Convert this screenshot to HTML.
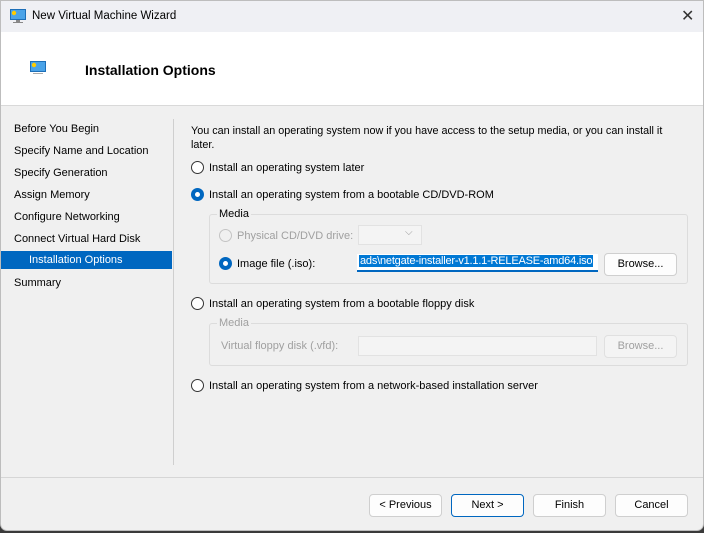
<!DOCTYPE html>
<html><head><style>
*{margin:0;padding:0;box-sizing:border-box}
body{width:704px;height:533px;overflow:hidden;background:#3a3a3a;font-family:"Liberation Sans",sans-serif;font-size:11px;color:#000;position:relative}
.win{position:absolute;left:0;top:0;width:704px;height:531px;background:#f0f0f0;border:1px solid #bdbdbd;border-radius:0 0 7px 7px;overflow:hidden}
.a{position:absolute;white-space:nowrap}
.title{position:absolute;left:0;top:0;width:704px;height:31px;background:#eff0f4}
.hdr{position:absolute;left:0;top:31px;width:704px;height:74px;background:#fff;border-bottom:1px solid #d9d9d9}
.nav{position:absolute;left:13px;font-size:11px}
.sel{position:absolute;left:0;top:250px;width:171px;height:18px;background:#0067c0;color:#fff}
.radio{position:absolute;width:13px;height:13px;border:1px solid #333;border-radius:50%;background:#fff}
.radio.on{border:4px solid #0067c0}
.radio.dis{border-color:#c4c4c4}
.btn{position:absolute;height:23px;border:1px solid #cfcfcf;border-radius:4px;background:#fdfdfd;text-align:center;line-height:21px;font-size:11px}
.grp{position:absolute;border:1px solid #dcdcdc;border-radius:3px}
.dis{color:#a0a0a0}
</style></head><body>
<div class="win">
<div class="title">
<svg class="a" style="left:9px;top:8px" width="16" height="14" viewBox="0 0 16 14"><rect x="0.5" y="0.5" width="15" height="10" fill="#4aa3e8" stroke="#1d6fb8"/><circle cx="4" cy="4" r="2.2" fill="#ffcc00"/><rect x="6" y="11" width="4" height="2" fill="#888"/><rect x="3" y="13" width="10" height="1" fill="#888"/></svg>
<div class="a" style="left:31px;top:9px;font-size:11.5px">New Virtual Machine Wizard</div>
<div class="a" style="left:680px;top:5px;font-size:16px;color:#333">✕</div>
</div>
<div class="hdr">
<svg class="a" style="left:29px;top:29px" width="16" height="14" viewBox="0 0 16 14"><rect x="0.5" y="0.5" width="15" height="10" fill="#4aa3e8" stroke="#1d6fb8"/><circle cx="4" cy="4" r="2.2" fill="#ffcc00"/><rect x="3" y="12" width="10" height="1" fill="#aaa"/></svg>
<div class="a" style="left:84px;top:30px;font-size:14px;font-weight:bold">Installation Options</div>
</div>
<div class="a" style="left:172px;top:118px;width:1px;height:346px;background:#cfcfcf"></div>
<div class="nav a" style="top:122px">Before You Begin</div>
<div class="nav a" style="top:144px">Specify Name and Location</div>
<div class="nav a" style="top:166px">Specify Generation</div>
<div class="nav a" style="top:188px">Assign Memory</div>
<div class="nav a" style="top:210px">Configure Networking</div>
<div class="nav a" style="top:232px">Connect Virtual Hard Disk</div>
<div class="sel"><div class="a" style="left:28px;top:3px;font-size:11px">Installation Options</div></div>
<div class="nav a" style="top:276px">Summary</div>

<div class="a" style="left:190px;top:123px;font-size:10.8px;line-height:14px">You can install an operating system now if you have access to the setup media, or you can install it<br>later.</div>
<div class="radio" style="left:190px;top:160px"></div><div class="a" style="left:208px;top:161px">Install an operating system later</div>
<div class="radio on" style="left:190px;top:187px"></div><div class="a" style="left:208px;top:188px">Install an operating system from a bootable CD/DVD-ROM</div>
<div class="grp" style="left:208px;top:213px;width:479px;height:70px"></div>
<div class="a" style="left:216px;top:207px;background:#f0f0f0;padding:0 2px">Media</div>
<div class="radio dis" style="left:218px;top:228px;background:#f0f0f0"></div><div class="a dis" style="left:236px;top:229px">Physical CD/DVD drive:</div>
<div class="a" style="left:357px;top:224px;width:64px;height:20px;border:1px solid #e2e2e2;background:#f4f4f4"><span class="a" style="left:46px;top:1px;color:#999;font-size:10px">⌵</span></div>
<div class="radio on" style="left:218px;top:256px"></div><div class="a" style="left:236px;top:257px">Image file (.iso):</div>
<div class="a" style="left:356px;top:253px;width:241px;height:18px;background:#fff;border-bottom:2px solid #0067c0;overflow:hidden"><span class="a" style="left:2px;top:1px;background:#0078d4;color:#fff;padding:0 1px;font-size:11px;letter-spacing:-0.2px">ads\netgate-installer-v1.1.1-RELEASE-amd64.iso</span></div>
<div class="btn" style="left:603px;top:252px;width:73px">Browse...</div>
<div class="radio" style="left:190px;top:296px"></div><div class="a" style="left:208px;top:297px">Install an operating system from a bootable floppy disk</div>
<div class="grp" style="left:208px;top:322px;width:479px;height:43px"></div>
<div class="a dis" style="left:216px;top:316px;background:#f0f0f0;padding:0 2px">Media</div>
<div class="a dis" style="left:220px;top:339px">Virtual floppy disk (.vfd):</div>
<div class="a" style="left:357px;top:335px;width:239px;height:20px;border:1px solid #e2e2e2;background:#f4f4f4"></div>
<div class="btn dis" style="left:603px;top:334px;width:73px;border-color:#e0e0e0;background:#f4f4f4">Browse...</div>
<div class="radio" style="left:190px;top:378px"></div><div class="a" style="left:208px;top:379px">Install an operating system from a network-based installation server</div>

<div class="a" style="left:0;top:476px;width:704px;height:1px;background:#d6d6d6"></div>
<div class="btn" style="left:368px;top:493px;width:73px">&lt; Previous</div>
<div class="btn" style="left:450px;top:493px;width:73px;border-color:#0067c0">Next &gt;</div>
<div class="btn" style="left:532px;top:493px;width:73px">Finish</div>
<div class="btn" style="left:614px;top:493px;width:73px">Cancel</div>
</div>
</body></html>
